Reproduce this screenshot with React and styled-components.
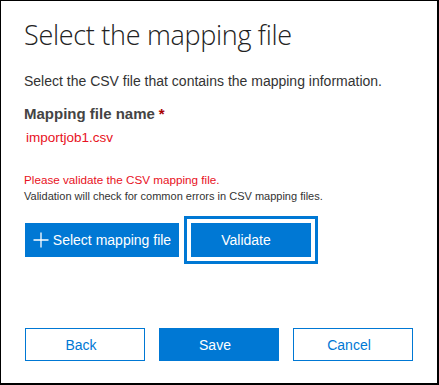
import React from "react";
import styled, { createGlobalStyle } from "styled-components";

const Global = createGlobalStyle`
  html, body { margin: 0; padding: 0; background: #fff; }
  body { font-family: "Segoe UI", "Liberation Sans", Arial, sans-serif; }
  * { box-sizing: border-box; }
`;

const Panel = styled.div`
  width: 439px;
  height: 385px;
  border-style: solid;
  border-color: #000;
  border-width: 1px 2px 2px 1px;
  padding: 16px 0 0 23px;
  display: flex;
  flex-direction: column;
  background: #fff;
`;

const Title = styled.h1`
  margin: 0;
  font-family: "Open Sans", "Liberation Sans", sans-serif;
  font-weight: 300;
  font-size: 27px;
  line-height: 36px;
  color: #222;
  letter-spacing: -0.3px;
`;

const Intro = styled.p`
  margin: 18px 0 0;
  font-size: 14px;
  line-height: 20px;
  color: #333;
`;

const Label = styled.div`
  margin-top: 13px;
  font-size: 15px;
  line-height: 20px;
  font-weight: 700;
  color: #444;
`;

const Required = styled.span`
  color: #a80000;
  margin-left: 4px;
`;

const FileName = styled.div`
  margin: 4px 0 0 2px;
  font-size: 13.5px;
  line-height: 20px;
  color: #e81123;
`;

const Message = styled.div`
  margin-top: ${(p) => p.$top}px;
  font-size: ${(p) => p.$size}px;
  line-height: 17px;
  color: ${(p) => p.$color};
`;

const ButtonRow = styled.div`
  display: flex;
  gap: ${(p) => p.$gap}px;
  margin-top: ${(p) => p.$top}px;
  padding-left: 1px;
`;

const Button = styled.button`
  width: ${(p) => p.$width}px;
  height: ${(p) => p.$height}px;
  margin: 0;
  padding: 0 ${(p) => p.$shift}px 0 0;
  font-family: "Segoe UI", "Liberation Sans", Arial, sans-serif;
  font-size: 14px;
  white-space: nowrap;
  display: flex;
  align-items: center;
  justify-content: center;
  gap: 4px;
  cursor: pointer;
  background: ${(p) => (p.$primary ? "#0078d4" : "#fff")};
  color: ${(p) => (p.$primary ? "#fff" : "#0078d4")};
  border: ${(p) => (p.$primary ? "none" : "1px solid #0078d4")};
  outline: ${(p) => (p.$focused ? "3px solid #0078d4" : "none")};
  outline-offset: 4px;
`;

const Plus = styled.svg`
  width: 16px;
  height: 16px;
  flex: none;
`;

const Spacer = styled.div`
  flex: 1;
`;

export default function App() {
  return (
    <>
      <Global />
      <Panel>
        <Title>Select the mapping file</Title>
        <Intro>Select the CSV file that contains the mapping information.</Intro>
        <Label>
          Mapping file name<Required>*</Required>
        </Label>
        <FileName>importjob1.csv</FileName>
        <Message $top={23} $size={11.7} $color="#e81123">
          Please validate the CSV mapping file.
        </Message>
        <Message $top={0} $size={11} $color="#333">
          Validation will check for common errors in CSV mapping files.
        </Message>
        <ButtonRow $gap={12} $top={18}>
          <Button $primary $shift={0} $width={154} $height={34}>
            <Plus viewBox="0 0 16 16">
              <path d="M8 0.5v15M0.5 8h15" stroke="#fff" strokeWidth="1.3" />
            </Plus>
            Select mapping file
          </Button>
          <Button $primary $focused $shift={10} $width={120} $height={34}>
            Validate
          </Button>
        </ButtonRow>
        <ButtonRow $gap={14} $top={71}>
          <Button $shift={8} $width={120} $height={33}>Back</Button>
          <Button $primary $shift={8} $width={120} $height={33}>Save</Button>
          <Button $shift={8} $width={120} $height={33}>Cancel</Button>
        </ButtonRow>
        <Spacer />
      </Panel>
    </>
  );
}
